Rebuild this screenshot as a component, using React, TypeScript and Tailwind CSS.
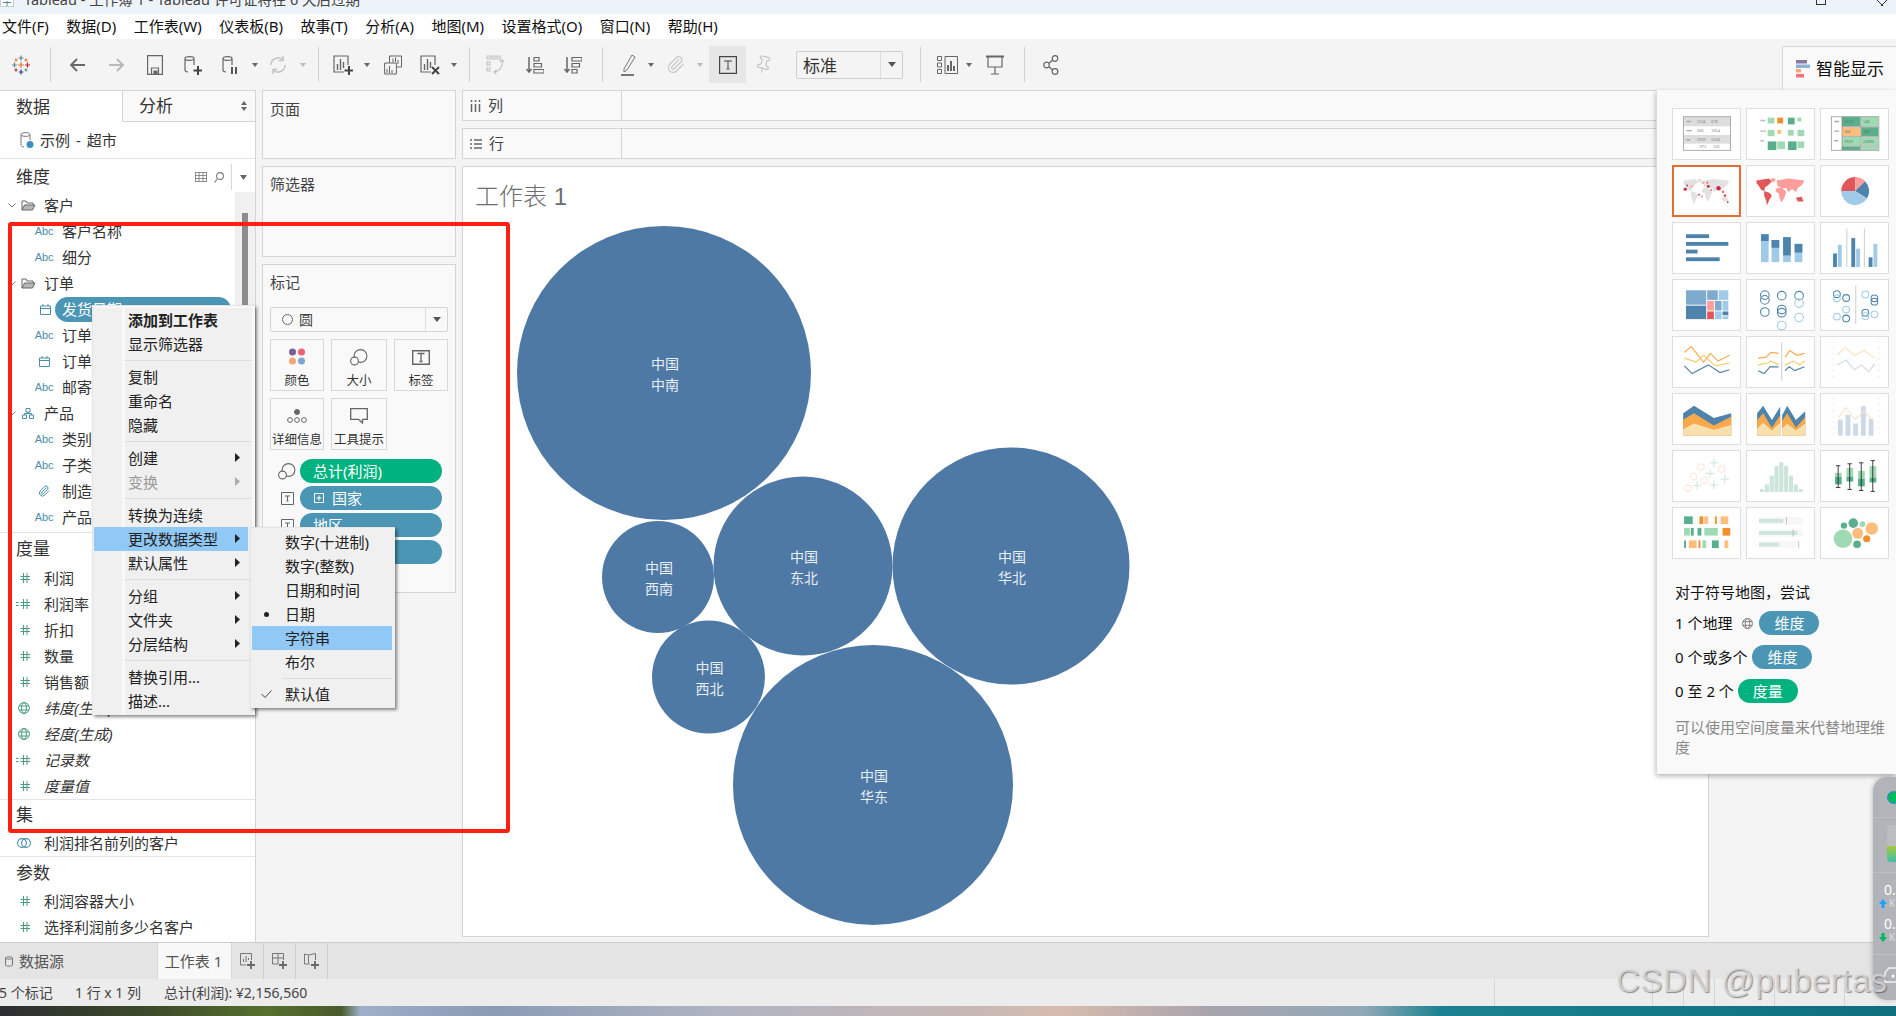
import type { ReactNode } from 'react'
import { Paperclip, Pin } from 'lucide-react'

const DARK = '#59ae8b'
const LIGHT = '#a0dab3'
const ORANGE = '#f28e2b'
const PEACH = '#ffbe7d'
const BLUE = '#4e83ab'
const SKY = '#a0cbe8'

function Caret({ disabled }: { disabled?: boolean }) {
  return (
    <svg width="6" height="4" viewBox="0 0 6 4">
      <path d="M0 0h6L3 4z" fill={disabled ? '#bbbbbb' : '#666666'} />
    </svg>
  )
}

function Slot({ className, children }: { className: string; children?: ReactNode }) {
  return <div className={`flex h-full shrink-0 items-center justify-center ${className}`}>{children}</div>
}

function Sep({ className }: { className: string }) {
  return <div className={`h-[35px] w-px shrink-0 bg-[#d0d0d0] ${className}`} />
}

function TableauLogo() {
  const cross = (x: number, y: number, s: number, c: string) => (
    <path key={`${x}-${y}`} d={`M${x - s} ${y}h${s * 2}M${x} ${y - s}v${s * 2}`} stroke={c} strokeWidth="1.2" />
  )
  return (
    <svg width="18" height="20" viewBox="0 0 18 20">
      {cross(9, 10, 3, '#e8762c')}
      {cross(9, 3, 2.4, '#5b879b')}
      {cross(9, 17, 2.4, '#1f447e')}
      {cross(2.5, 10, 2.4, '#59879b')}
      {cross(15.5, 10, 2.4, '#c72035')}
      {cross(4, 5, 1.6, '#e8762c')}
      {cross(14, 5, 1.6, '#e8762c')}
      {cross(4, 15, 1.6, '#c72035')}
      {cross(14, 15, 1.6, '#5b879b')}
    </svg>
  )
}

function Cylinder({ children }: { children: ReactNode }) {
  return (
    <svg width="18" height="20" viewBox="0 0 18 20" fill="none" stroke="#666666" strokeWidth="1.2">
      <path d="M1 3.5C1 1 10 1 10 3.5V10M1 3.5C1 6 10 6 10 3.5M1 3.5V15c0 1 1 1.8 3 2" />
      {children}
    </svg>
  )
}

function BarIcon({ children }: { children: ReactNode }) {
  return (
    <svg width="20" height="20" viewBox="0 0 20 20" fill="none" stroke="#666666" strokeWidth="1.2">
      <path d="M11 17H1V1h14v9" />
      <path d="M4.5 15V9M7.5 15V4M10.5 13V7" strokeWidth="1.4" />
      {children}
    </svg>
  )
}

function Toolbar() {
  return (
    <div className="flex h-[51px] shrink-0 items-center bg-[#f4f4f4]">
      <Slot className="w-[42px]"><TableauLogo /></Slot>
      <Sep className="ml-[8px]" />
      <Slot className="ml-[7px] w-[38px]">
        <svg width="17" height="16" viewBox="0 0 17 16" fill="none" stroke="#666666" strokeWidth="1.8"><path d="M16 8H2M8 2 2 8l6 6" /></svg>
      </Slot>
      <Slot className="w-[40px]">
        <svg width="17" height="16" viewBox="0 0 17 16" fill="none" stroke="#b8b8b8" strokeWidth="1.8"><path d="M1 8h14M9 2l6 6-6 6" /></svg>
      </Slot>
      <Slot className="w-[38px]">
        <svg width="16" height="20" viewBox="0 0 16 20" fill="none" stroke="#666666" strokeWidth="1.2"><path d="M.6.6h14.8v18.8H.6zM4.5 19v-6h7v6" /><path d="M7 16h3v3H7z" fill="#666666" /></svg>
      </Slot>
      <Slot className="w-[38px]">
        <Cylinder><path d="M14 11v9M9.5 15.5h9" strokeWidth="2" stroke="#444444" /></Cylinder>
      </Slot>
      <Slot className="w-[38px]">
        <Cylinder><path d="M10 12v7M14 12v7" strokeWidth="2" stroke="#555555" /></Cylinder>
      </Slot>
      <Slot className="w-[10px]"><Caret /></Slot>
      <Slot className="w-[36px]">
        <svg width="18" height="20" viewBox="0 0 18 20" fill="none" stroke="#c4c4c4" strokeWidth="1.5"><path d="M2 10a7 7 0 0 1 12-5M16 10a7 7 0 0 1-12 5" /><path d="M14 1v4.5H9.5M4 19v-4.5h4.5" /></svg>
      </Slot>
      <Slot className="w-[14px]"><Caret disabled /></Slot>
      <Sep className="ml-[8px]" />
      <Slot className="ml-[6px] w-[36px]">
        <BarIcon><path d="M16 11v9M11.5 15.5H20" stroke="#444444" strokeWidth="2" /></BarIcon>
      </Slot>
      <Slot className="w-[12px]"><Caret /></Slot>
      <Slot className="w-[40px]">
        <svg width="18" height="20" viewBox="0 0 18 20" fill="none" stroke="#666666" strokeWidth="1"><path d="M5.5 8V1h12v11h-5" /><path d="M.6 8h11.8v11H.6z" fill="#f4f4f4" /><path d="M9 7.5v-4M11.500 7V2.500M14 9V5M3 18v-4M5.5 18v-7M8 18v-3" /></svg>
      </Slot>
      <Slot className="w-[34px]">
        <BarIcon><path d="M12 12l7 7M19 12l-7 7" stroke="#444444" strokeWidth="2" /></BarIcon>
      </Slot>
      <Slot className="w-[14px]"><Caret /></Slot>
      <Sep className="ml-[8px]" />
      <Slot className="w-[50px]">
        <svg width="18" height="20" viewBox="0 0 18 20" fill="none" stroke="#c0c0c0" strokeWidth="1.1"><path d="M1 1h3v3H1zM6 1h3v3H6zM11 1h3v3h-3zM1 7h3v3H1zM1 13h3v3H1z" /><path d="M16 6c1 5-1 9-7 11M16 4.500 13.500 7M16 4.500 18 7M8 17l2.500-2M8 17l2.500 2" /></svg>
      </Slot>
      <Slot className="w-[30px]">
        <svg width="18" height="18" viewBox="0 0 18 18" fill="none" stroke="#666666" strokeWidth="1.2"><path d="M3 1v15M.5 13 3 16l2.500-3" strokeWidth="1.5" /><path d="M8 1.500h5v3.500H8zM8 7.500h7.500V11H8zM8 13.500h10V17H8z" /></svg>
      </Slot>
      <Slot className="w-[46px]">
        <svg width="18" height="18" viewBox="0 0 18 18" fill="none" stroke="#666666" strokeWidth="1.2"><path d="M3 1v15M.5 13 3 16l2.500-3" strokeWidth="1.5" /><path d="M8 1.500h10V5H8zM8 7.500h7.500V11H8zM8 13.500h5V17H8z" /></svg>
      </Slot>
      <Sep className="ml-[6px]" />
      <Slot className="ml-[10px] w-[32px]">
        <svg width="16" height="22" viewBox="0 0 16 22" fill="none" stroke="#777777" strokeWidth="1"><path d="M3 15 11 1l3 2-8 13-3 2z" /><path d="M0 21h13" strokeWidth="2" /></svg>
      </Slot>
      <Slot className="w-[12px]"><Caret /></Slot>
      <Slot className="w-[36px]"><Paperclip size={19} color="#c8c8c8" strokeWidth={1.5} /></Slot>
      <Slot className="w-[14px]"><Caret disabled /></Slot>
      <div className="ml-[2px] flex h-[37px] w-[37px] shrink-0 items-center justify-center bg-[#e6e6e6]">
        <svg width="18" height="18" viewBox="0 0 18 18" fill="none" stroke="#444444"><path d="M.6.6h16.8v16.8H.6z" strokeWidth="1.2" /><path d="M5 5h8M9 5v8M7.500 13h3" /></svg>
      </div>
      <Slot className="w-[34px]"><Pin size={19} color="#c4c4c4" strokeWidth={1.5} className="rotate-[15deg]" /></Slot>
      <div className="ml-[16px] flex h-[28px] w-[107px] shrink-0 rounded-[2px] border border-[#cfcfcf] text-[#333333]">
        <div className="flex-1 pl-[6px] text-[17px] leading-[27px]">标准</div>
        <div className="flex w-[22px] items-center justify-center border-l border-[#dddddd]"><svg width="8" height="5" viewBox="0 0 8 5"><path d="M0 0h8L4 5z" fill="#555555" /></svg></div>
      </div>
      <Sep className="ml-[17px]" />
      <Slot className="ml-[8px] w-[36px]">
        <svg width="21" height="18" viewBox="0 0 21 18" fill="none" stroke="#666666"><path d="M.5.500h4v4h-4zM.5 7h4v4h-4zM.5 13.500h4v4h-4zM8 .5h12.500v17H8z" /><path d="M11 15V9M14 15V5M17 15v-5" strokeWidth="2" /></svg>
      </Slot>
      <Slot className="w-[8px]"><Caret /></Slot>
      <Slot className="w-[44px]">
        <svg width="18" height="20" viewBox="0 0 18 20" fill="none" stroke="#666666"><path d="M0 1.500h18" strokeWidth="2" /><path d="M2 2v10h14V2M9 12v7M5 19h8" strokeWidth="1.2" /></svg>
      </Slot>
      <Sep className="ml-[7px]" />
      <Slot className="w-[52px]">
        <svg width="16" height="20" viewBox="0 0 16 20" fill="none" stroke="#666666" strokeWidth="1.2"><circle cx="3.5" cy="10" r="2.8" /><circle cx="12" cy="3.5" r="2.8" /><circle cx="12" cy="16.5" r="2.8" /><path d="M6 8.300 9.700 5M6 11.700 9.700 15" /></svg>
      </Slot>
      <div className="flex-1" />
      <div className="mt-[7px] flex h-[44px] w-[114px] shrink-0 items-center gap-[6px] border-l border-t border-[#d8d8d8] bg-[#f9f9f9] pl-[13px] text-[17px] text-[#111111]">
        <svg width="14" height="18" viewBox="0 0 14 18" className="shrink-0"><path d="M0 0h11v3.500H0z" fill="#8a77a0" /><path d="M0 4.500h14V8H0z" fill="#8fb0d4" /><path d="M0 9h5v3.500H0z" fill="#f4a673" /><path d="M0 14h8v3.500H0z" fill="#f0737f" /></svg>
        <span>智能显示</span>
      </div>
    </div>
  )
}

function Hash({ calc }: { calc?: boolean }) {
  return (
    <svg width="16" height="12" viewBox="0 0 16 12" fill="none" stroke="#4a9c80" strokeWidth="1">
      {calc && <path d="M0 4.500h2.500M0 7.500h2.500" strokeWidth="1.2" />}
      <path d="M7.500 1v10M11 1v10M4.500 4.500h9.500M4.500 7.500h9.500" />
    </svg>
  )
}

function Globe() {
  return (
    <svg width="12" height="12" viewBox="0 0 12 12" fill="none" stroke="#4a9c80" strokeWidth="1">
      <circle cx="6" cy="6" r="5.4" />
      <ellipse cx="6" cy="6" rx="2.4" ry="5.4" />
      <path d="M1 4h10M1 8h10" />
    </svg>
  )
}

function Calendar() {
  return (
    <svg width="11" height="11" viewBox="0 0 11 11" fill="none" stroke="#4b8eaa" strokeWidth="1">
      <path d="M.5 2h10v8.500H.5zM.5 4.500h10M3 0v2M8 0v2" />
    </svg>
  )
}

function Folder() {
  return (
    <svg width="15" height="11" viewBox="0 0 15 11" fill="none" stroke="#666666" strokeWidth="1">
      <path d="M1 10V1h4l1 2h6v2" />
      <path d="M1 10h10.500L14 5H3.500z" fill="#b8b8b8" />
    </svg>
  )
}

function Chevron() {
  return (
    <svg width="8" height="5" viewBox="0 0 8 5" fill="none" stroke="#777777"><path d="m.5.500 3.500 3.500 3.500-3.500" /></svg>
  )
}

function Abc() {
  return <span className="font-['Liberation_Sans',sans-serif] text-[11px] tracking-[-0.2px] text-[#4b8eaa]">Abc</span>
}

function GroupRow({ icon, label, chevron = true }: { icon: ReactNode; label: string; chevron?: boolean }) {
  return (
    <div className="flex h-[26px] items-center">
      <span className="flex w-[18px] justify-end pr-[2px]">{chevron && <Chevron />}</span>
      <span className="flex w-[20px] justify-center">{icon}</span>
      <span className="ml-[6px] whitespace-nowrap">{label}</span>
    </div>
  )
}

function DimRow({ icon, label }: { icon: ReactNode; label: string }) {
  return (
    <div className="flex h-[26px] items-center">
      <span className="ml-[36px] flex w-[16px] justify-center">{icon}</span>
      <span className="ml-[10px] whitespace-nowrap">{label}</span>
    </div>
  )
}

function MeasureRow({ icon, label, italic }: { icon: ReactNode; label: string; italic?: boolean }) {
  return (
    <div className="flex h-[26px] items-center">
      <span className="ml-[16px] flex w-[16px] justify-center">{icon}</span>
      <span className={`ml-[12px] whitespace-nowrap ${italic ? 'italic' : ''}`}>{label}</span>
    </div>
  )
}

function DataPanel() {
  return (
    <div className="flex w-[256px] shrink-0 flex-col border-r border-t border-[#d4d4d4] bg-white text-[15px] text-[#333333]">
      <div className="flex h-[31px] shrink-0 text-[17px]">
        <div className="flex w-[122px] items-center pl-[16px]">数据</div>
        <div className="flex flex-1 items-center justify-between border-b border-l border-[#d4d4d4] bg-[#f9f9f9] pl-[16px] pr-[8px]">
          <span>分析</span>
          <svg width="6" height="10" viewBox="0 0 6 10"><path d="M0 4h6L3 0zM0 6h6l-3 4z" fill="#666666" /></svg>
        </div>
      </div>
      <div className="flex h-[37px] shrink-0 items-center gap-[6px] border-b border-[#e4e4e4] pl-[20px]">
        <svg width="14" height="18" viewBox="0 0 14 18" fill="none" stroke="#777777"><path d="M1 3.500C1 1 10 1 10 3.500V9M1 3.500C1 6 10 6 10 3.500M1 3.500V14c0 1 1 1.800 3 2" /><circle cx="10" cy="13.5" r="3.5" fill="#3f8fc4" stroke="none" /></svg>
        <span className="[word-spacing:2px]">示例 - 超市</span>
      </div>
      <div className="flex h-[33px] shrink-0 items-center pl-[16px] pr-[8px] pt-[3px] text-[17px]">
        <span className="flex-1">维度</span>
        <svg width="12" height="10" viewBox="0 0 12 10" fill="none" stroke="#777777" strokeWidth="0.8"><path d="M0 .5h12M0 3.500h12M0 6.500h12M0 9.500h12M.5 0v10M4 0v10M8 0v10M11.500 0v10" /></svg>
        <svg className="ml-[7px]" width="10" height="11" viewBox="0 0 10 11" fill="none" stroke="#777777" strokeWidth="1.1"><circle cx="6" cy="4" r="3.4" /><path d="M3.500 6.500 .5 10.500" /></svg>
        <div className="ml-[7px] mr-[8px] h-[26px] w-px bg-[#d8d8d8]" />
        <svg width="7" height="5" viewBox="0 0 7 5"><path d="M0 0h7L3.500 5z" fill="#666666" /></svg>
      </div>
      <div className="flex h-[340px] shrink-0">
        <div className="min-w-0 flex-1 overflow-hidden">
          <GroupRow icon={<Folder />} label="客户" />
          <DimRow icon={<Abc />} label="客户名称" />
          <DimRow icon={<Abc />} label="细分" />
          <GroupRow icon={<Folder />} label="订单" />
          <div className="relative flex h-[26px] items-center">
            <span className="ml-[36px] flex w-[16px] justify-center pl-[3px]"><Calendar /></span>
            <div className="ml-[3px] flex h-[25px] w-[176px] shrink-0 items-center rounded-full bg-[#4b96b4] pl-[7px] text-white">发货日期</div>
          </div>
          <DimRow icon={<Abc />} label="订单 Id" />
          <DimRow icon={<Calendar />} label="订单日期" />
          <DimRow icon={<Abc />} label="邮寄方式" />
          <GroupRow
            icon={
              <svg width="12" height="11" viewBox="0 0 12 11" fill="none" stroke="#4b8eaa"><path d="M4 .5h4v3.500H4zM.5 7h4v3.500h-4zM7.500 7h4v3.500h-4zM6 4v1.500H2.500V7M6 5.500h3.500V7" /></svg>
            }
            label="产品"
          />
          <DimRow icon={<Abc />} label="类别" />
          <DimRow icon={<Abc />} label="子类别" />
          <DimRow icon={<Paperclip size={12} color="#4b8eaa" />} label="制造商" />
          <DimRow icon={<Abc />} label="产品名称" />
        </div>
        <div className="w-[20px] shrink-0 bg-[#f0f0f0] pl-[7px] pt-[21px]">
          <div className="h-[110px] w-[6px] bg-[#8c8c8c]" />
        </div>
      </div>
      <div className="flex h-[33px] shrink-0 items-center border-t border-[#e4e4e4] pl-[16px] text-[17px]">度量</div>
      <MeasureRow icon={<Hash />} label="利润" />
      <MeasureRow icon={<Hash calc />} label="利润率" />
      <MeasureRow icon={<Hash />} label="折扣" />
      <MeasureRow icon={<Hash />} label="数量" />
      <MeasureRow icon={<Hash />} label="销售额" />
      <MeasureRow icon={<Globe />} label="纬度(生成)" italic />
      <MeasureRow icon={<Globe />} label="经度(生成)" italic />
      <MeasureRow icon={<Hash calc />} label="记录数" italic />
      <MeasureRow icon={<Hash />} label="度量值" italic />
      <div className="flex h-[31px] shrink-0 items-center border-t border-[#e4e4e4] pl-[16px] text-[17px]">集</div>
      <MeasureRow
        icon={
          <svg width="14" height="12" viewBox="0 0 14 12" fill="none" stroke="#4b8eaa" strokeWidth="1.1"><circle cx="5" cy="6" r="4.4" /><circle cx="9" cy="6" r="4.4" /></svg>
        }
        label="利润排名前列的客户"
      />
      <div className="flex h-[32px] shrink-0 items-center border-t border-[#e4e4e4] pl-[16px] text-[17px]">参数</div>
      <MeasureRow icon={<Hash />} label="利润容器大小" />
      <MeasureRow icon={<Hash />} label="选择利润前多少名客户" />
    </div>
  )
}

function MarkButton({ label, children }: { label: string; children: ReactNode }) {
  return (
    <div className="flex h-[52px] flex-col items-center justify-between border border-[#d8d8d8] pt-[5px] text-[12.5px] leading-[18px] text-[#333333]">
      <div className="flex h-[24px] items-center">{children}</div>
      <span className="whitespace-nowrap">{label}</span>
    </div>
  )
}

function TBox() {
  return (
    <svg width="13" height="13" viewBox="0 0 13 13" fill="none" stroke="#666666"><path d="M.5.500h12v12H.5z" /><path d="M4 4h5M6.500 4v5M5.500 9h2" /></svg>
  )
}

function SizeGlyph() {
  return (
    <svg width="18" height="17" viewBox="0 0 18 17" fill="none" stroke="#666666" strokeWidth="1.1"><circle cx="10.5" cy="7" r="6.4" /><circle cx="4.5" cy="12" r="3.9" fill="#f9f9f9" /></svg>
  )
}

function MarkPill({ icon, color, children }: { icon?: ReactNode; color: string; children: ReactNode }) {
  return (
    <div className="flex items-center">
      <span className="flex w-[31px] justify-center pl-[5px]">{icon}</span>
      <div className={`flex h-[24px] w-[142px] items-center rounded-full pl-[13px] text-[15px] text-white ${color}`}>{children}</div>
    </div>
  )
}

function CardsColumn() {
  return (
    <div className="flex w-[206px] shrink-0 flex-col gap-[7px] pl-[6px]">
      <div className="h-[69px] w-[194px] border border-[#d4d4d4] bg-[#f9f9f9] pl-[7px] pt-[7px] text-[15px] text-[#444444]">页面</div>
      <div className="h-[91px] w-[194px] border border-[#d4d4d4] bg-[#f9f9f9] pl-[7px] pt-[6px] text-[15px] text-[#444444]">筛选器</div>
      <div className="h-[329px] w-[194px] border border-[#d4d4d4] bg-[#f9f9f9] pl-[7px] pr-[7px] pt-[7px]">
        <div className="text-[15px] leading-[21px] text-[#444444]">标记</div>
        <div className="mt-[14px] flex h-[25px] rounded-[2px] border border-[#d4d4d4] text-[14px] text-[#444444]">
          <div className="flex flex-1 items-center gap-[6px] pl-[11px]">
            <span className="h-[11px] w-[11px] rounded-full border border-[#666666]" />圆
          </div>
          <div className="flex w-[22px] items-center justify-center border-l border-[#dddddd]">
            <svg width="8" height="5" viewBox="0 0 8 5"><path d="M0 0h8L4 5z" fill="#555555" /></svg>
          </div>
        </div>
        <div className="mt-[7px] grid grid-cols-[54px_56px_54px] gap-[7px]">
          <MarkButton label="颜色">
            <svg width="18" height="18" viewBox="0 0 18 18"><circle cx="4.5" cy="4" r="3.5" fill="#7a5f96" /><circle cx="13.5" cy="4" r="3.5" fill="#ef5f6f" /><circle cx="4.5" cy="13" r="3.5" fill="#f4a673" /><circle cx="13.5" cy="13" r="3.5" fill="#7fa6d1" /></svg>
          </MarkButton>
          <MarkButton label="大小"><SizeGlyph /></MarkButton>
          <MarkButton label="标签">
            <svg width="18" height="15" viewBox="0 0 18 15" fill="none" stroke="#666666"><path d="M.7.700h16.600v13.600H.7z" strokeWidth="1.4" /><path d="M5.500 3.500h7M9 3.500v8M7.500 11.500h3" strokeWidth="1.3" /></svg>
          </MarkButton>
          <MarkButton label="详细信息">
            <svg width="20" height="14" viewBox="0 0 20 14" fill="none" stroke="#666666"><circle cx="10" cy="3" r="2.5" fill="#666666" /><circle cx="3" cy="11" r="2.4" /><circle cx="10" cy="11" r="2.4" /><circle cx="17" cy="11" r="2.4" /></svg>
          </MarkButton>
          <MarkButton label="工具提示">
            <svg width="18" height="16" viewBox="0 0 18 16" fill="none" stroke="#666666" strokeWidth="1.3"><path d="M.7.700h16.600v10.600H12.500V15l-4-3.700H.7z" /></svg>
          </MarkButton>
        </div>
        <div className="mt-[9px] ml-[-1px] flex flex-col gap-[3px]">
          <MarkPill icon={<SizeGlyph />} color="bg-[#00b27f]">总计(利润)</MarkPill>
          <MarkPill icon={<TBox />} color="bg-[#4b96b4]">
            <svg className="mr-[7px] ml-[1px]" width="11" height="11" viewBox="0 0 11 11" fill="none" stroke="#ffffff"><path d="M.5.500h9v9h-9zM2.500 5h5M5 2.500v5" /></svg>
            国家
          </MarkPill>
          <MarkPill icon={<TBox />} color="bg-[#4b96b4]">地区</MarkPill>
          <MarkPill icon={<TBox />} color="bg-[#4b96b4]">省/自治区</MarkPill>
        </div>
      </div>
    </div>
  )
}

function Shelf({ icon, label }: { icon: ReactNode; label: string }) {
  return (
    <div className="flex h-[31px] shrink-0 border-y border-l border-[#d4d4d4] bg-[#f9f9f9]">
      <div className="flex w-[159px] items-center gap-[7px] border-r border-[#d4d4d4] pl-[7px] text-[15px] text-[#444444]">
        {icon}
        {label}
      </div>
    </div>
  )
}

const bubbles = [
  { cx: 664, cy: 373, r: 147, a: '中南' },
  { cx: 658, cy: 577, r: 56, a: '西南' },
  { cx: 803, cy: 566, r: 89.5, a: '东北' },
  { cx: 1011, cy: 566, r: 118.5, a: '华北' },
  { cx: 708.5, cy: 677, r: 56.5, a: '西北' },
  { cx: 873, cy: 785, r: 140, a: '华东' },
]

function Canvas() {
  return (
    <div className="relative h-[771px] w-[1247px] shrink-0 border border-[#d4d4d4] bg-white">
      <svg className="absolute inset-0" width="1245" height="769" viewBox="463 167 1245 769">
        {bubbles.map((b) => (
          <g key={b.a}>
            <circle cx={b.cx} cy={b.cy} r={b.r} fill="#4f79a5" />
            <text x={b.cx + 1} y={b.cy - 4} textAnchor="middle" fontSize="14" fill="#e8eef5">中国</text>
            <text x={b.cx + 1} y={b.cy + 17} textAnchor="middle" fontSize="14" fill="#e8eef5">{b.a}</text>
          </g>
        ))}
      </svg>
      <div className="relative pl-[12px] pt-[10px] font-['Liberation_Sans','Noto_Sans_CJK_SC',sans-serif] text-[24px] font-light leading-[40px] text-[#6e6e6e]">工作表 1</div>
    </div>
  )
}

function ThumbBox({ selected, children }: { selected?: boolean; children: ReactNode }) {
  return (
    <div className={`h-[52px] w-[69px] border bg-white ${selected ? 'border-2 border-[#e26d35]' : 'border-[#dedede]'}`}>
      <svg width="100%" height="100%" viewBox="0 0 68 52" fontFamily="Liberation Serif, serif">
        {children}
      </svg>
    </div>
  )
}

function Rects({ items }: { items: [number, number, number, number, string][] }) {
  return (
    <>
      {items.map(([x1, y1, x2, y2, c], i) => (
        <rect key={i} x={x1} y={y1} width={x2 - x1} height={y2 - y1} fill={c} />
      ))}
    </>
  )
}

function Poly({ d, fill, stroke }: { d: string; fill?: string; stroke?: string }) {
  return <polyline points={d} fill={fill ?? 'none'} stroke={stroke} strokeWidth="1.2" />
}

function World({ a, b }: { a: string; b: string }) {
  return (
    <>
      <path d="M9 15 22 13 25 16 21 20 18 22 17 26 14 25 11 20 9 18Z" fill={a} />
      <path d="M24 13h5l-1 3-3 1Z" fill={b} />
      <path d="M17 26 23 28 25 31 22 36 20 41 19 36 17 31Z" fill={a} />
      <path d="M30 15 42 13 59 15 56 20 52 23 50 27 46 24 42 27 40 23 35 23 31 21Z" fill={b} />
      <path d="M30 23 36 23 40 27 38 33 35 38 33 33 32 28 29 27Z" fill={b} />
      <path d="M50 33 56 32 58 37 52 37Z" fill={a} />
    </>
  )
}

function Ticks() {
  return (
    <path d="M10 5h3M10 11h3M10 17h3M10 23h3M10 29h3M10 35h3M10 41h3M58 5h3M58 11h3M58 17h3M58 23h3M58 29h3M58 35h3M58 41h3" stroke="#eeeeee" />
  )
}

const thumbs: { selected?: boolean; art: ReactNode }[] = [
  {
    art: (
      <>
        <Rects items={[[10, 8, 59, 18, '#dddddd'], [10, 27, 59, 36, '#dddddd']]} />
        <rect x="10" y="8" width="49" height="35" fill="none" stroke="#aaaaaa" />
        <path d="M13 13h5M13 22.500h6M13 32h4" stroke="#aaaaaa" strokeWidth="1.5" />
        <g fontSize="4.5" fill="#777777">
          <text x="24" y="15">1234</text><text x="39" y="15">678</text>
          <text x="24" y="24">368</text><text x="39" y="24">3014</text>
          <text x="24" y="33">2929</text><text x="39" y="33">2556</text>
          <text x="27" y="41">971</text><text x="41" y="41">322</text>
        </g>
      </>
    ),
  },
  {
    art: (
      <>
        <path d="M13 12h5M13 23h6M13 33h4" stroke="#bbbbbb" strokeWidth="1.5" />
        <Rects
          items={[
            [20.7, 9, 27.7, 15, LIGHT], [30.7, 9, 36.7, 15, ORANGE], [41.7, 9, 48.7, 16, DARK], [51.7, 9, 55.7, 13, LIGHT],
            [20.7, 21.7, 27.7, 28.3, LIGHT], [30.7, 21.7, 34.7, 25.7, PEACH], [41.7, 21.7, 47.7, 27.7, LIGHT], [51.7, 21.7, 58.7, 28.3, LIGHT],
            [20.7, 33.7, 29.7, 42.7, DARK], [30.7, 33.7, 38.7, 41.7, LIGHT], [41.7, 33.7, 50.7, 42.7, DARK], [51.7, 33.7, 58.7, 40.7, LIGHT],
          ]}
        />
      </>
    ),
  },
  {
    art: (
      <>
        <path d="M13 13h5M13 23h5M13 33h4" stroke="#aaaaaa" strokeWidth="1.5" />
        <Rects
          items={[
            [21, 8, 40, 18, DARK], [41, 8, 59, 18, LIGHT], [21, 19, 40, 28, PEACH], [41, 19, 59, 28, DARK],
            [21, 29, 40, 38, LIGHT], [41, 29, 59, 38, LIGHT], [21, 39, 40, 43, DARK], [41, 39, 59, 43, LIGHT],
          ]}
        />
        <rect x="10" y="8" width="49.3" height="35" fill="none" stroke="#aaaaaa" />
        <path d="M21 8v35M40.500 8v35M21 18.500h38M21 28.500h38M21 38.500h38" stroke="#777777" strokeWidth="0.6" />
        <g fontSize="4.5" fill="#557766">
          <text x="23" y="15">1234</text><text x="43" y="15">546</text>
          <text x="23" y="25">368</text><text x="43" y="25">380</text>
          <text x="23" y="35">2929</text><text x="43" y="35">53890</text>
        </g>
      </>
    ),
  },
  {
    selected: true,
    art: (
      <>
        <World a="#e2e2e2" b="#e2e2e2" />
        {[
          [11, 24, 1.8, '#c72f45'], [13, 20, 1, '#c72f45'], [18, 21, 1.5, '#ffb0ac'], [30, 17, 1.5, '#ffb0ac'], [26, 30, 1, '#c72f45'], [29, 32, 1.3, '#ffb0ac'],
          [36, 21, 1.5, '#c72f45'], [39, 25, 1, '#e15759'], [47, 23, 2.4, '#c72f45'], [52, 27, 1.2, '#e15759'], [54, 31, 1.5, '#e15759'], [57, 38, 1, '#c72f45'], [35, 17, 1, '#e15759'],
        ].map(([x, y, r, c], i) => (
          <circle key={i} cx={x} cy={y} r={r} fill={c as string} />
        ))}
      </>
    ),
  },
  { art: <World a="#e15759" b="#ff9d9a" /> },
  {
    art: (
      <>
        <path d="M34.700 26H20.200A14.500 14.500 0 0 1 34.700 11.500Z" fill="#e15759" />
        <path d="M34.700 26V11.500A14.500 14.500 0 0 1 45 15.750Z" fill="#ff9d9a" />
        <path d="M34.700 26 45 15.750A14.500 14.500 0 0 1 47 33.700Z" fill={BLUE} />
        <path d="M34.700 26 47 33.700A14.500 14.500 0 0 1 20.200 26Z" fill={SKY} />
      </>
    ),
  },
  {
    art: <Rects items={[[12.7, 11.7, 36.7, 15.7, BLUE], [12.7, 19.7, 56.7, 23.7, BLUE], [12.7, 27.7, 24.7, 31.7, BLUE], [12.7, 35.7, 47.7, 39.7, BLUE]]} />,
  },
  {
    art: (
      <Rects
        items={[
          [13.7, 11.7, 21.7, 40.7, SKY], [13.7, 11.7, 21.7, 18.7, BLUE],
          [24.7, 17.7, 32.7, 40.7, SKY], [24.7, 17.7, 32.7, 25.7, BLUE],
          [36.7, 14.7, 44.7, 40.7, SKY], [36.7, 14.7, 44.7, 33.7, BLUE],
          [48.7, 21.7, 56.7, 40.7, SKY], [48.7, 21.7, 56.7, 30.7, BLUE],
        ]}
      />
    ),
  },
  {
    art: (
      <>
        <path d="M26 5.700v40M44.300 5.700v40" stroke="#cccccc" />
        <Rects
          items={[
            [11.7, 31.7, 15.7, 45.7, BLUE], [16.7, 22.7, 20.7, 45.7, SKY], [30.7, 15.7, 34.7, 45.7, BLUE],
            [35.7, 26.7, 39.7, 45.7, SKY], [48.7, 35.7, 52.7, 45.7, BLUE], [53.7, 21.7, 57.7, 45.7, SKY],
          ]}
        />
      </>
    ),
  },
  {
    art: (
      <Rects
        items={[
          [12.7, 10.7, 33.7, 25.7, '#7eaacd'], [12.7, 26.7, 33.7, 40.7, BLUE], [34.7, 10.7, 45.7, 20.7, '#7eaacd'], [46.7, 10.7, 56.7, 20.7, SKY],
          [34.7, 21.7, 41.7, 31.7, '#ff9d9a'], [42.7, 21.7, 49.7, 31.7, '#7eaacd'], [50.7, 21.7, 56.7, 31.7, SKY],
          [34.7, 32.7, 41.7, 40.7, '#e15759'], [42.7, 32.7, 49.7, 40.7, SKY], [50.7, 32.7, 56.7, 36.7, BLUE], [50.7, 37.7, 56.7, 40.7, SKY],
        ]}
      />
    ),
  },
  {
    art: (
      <g fill="none" strokeWidth="1.1">
        {[[17.7, 15.7, 0], [17.7, 20.7, 0], [35.3, 16.3, 0], [17.7, 33.3, 0], [35.3, 30.7, 0], [35.3, 34, 0], [53.3, 16.3, 0], [53.3, 24, 1], [53.3, 39, 1], [35.3, 47.3, 1]].map(([x, y, l], i) => (
          <circle key={i} cx={x} cy={y} r="4.5" stroke={l ? SKY : BLUE} />
        ))}
      </g>
    ),
  },
  {
    art: (
      <>
        <path d="M35.300 5.700v40" stroke="#cccccc" />
        <g fill="none" strokeWidth="1.1">
          {[[15.7, 14.7, 0], [15.7, 19, 1], [25.3, 18.7, 0], [25.3, 30.7, 1], [15.7, 38, 1], [25.3, 40, 0], [45.3, 15, 1], [54.7, 19, 0], [54.7, 22.5, 0], [45.3, 34, 0], [45.3, 37.5, 1], [54.7, 35.7, 1]].map(([x, y, l], i) => (
            <circle key={i} cx={x} cy={y} r="3.5" stroke={l ? SKY : BLUE} />
          ))}
        </g>
      </>
    ),
  },
  {
    art: (
      <>
        <Poly d="11,16 18,10 31,26 38,17 46,25 58,19" stroke="#f9a94b" />
        <Poly d="11,22 23,26 31,19 43,30 58,27" stroke="#f9cb6f" />
        <Poly d="11,30 19,38 36,29 48,37 58,34" stroke={BLUE} />
      </>
    ),
  },
  {
    art: (
      <>
        <path d="M35.300 5.700v40" stroke="#cccccc" />
        <Poly d="10.7,22 19,21 24,16 32,17" stroke="#f9a94b" />
        <Poly d="10.7,29 21,27 24,25 32,29" stroke="#f9cb6f" />
        <Poly d="10.7,35 17,38 23,31 32,31" stroke={BLUE} />
        <Poly d="38.7,21 43.7,14 51,19 59,17" stroke="#f9a94b" />
        <Poly d="38.7,29 47.7,25 54,29 59,25" stroke="#f9cb6f" />
        <Poly d="38.7,35 43,31 49,35 59,31" stroke={BLUE} />
      </>
    ),
  },
  {
    art: (
      <>
        <Ticks />
        <Poly d="16,19 24,11 34,19 44,14 55,22" stroke="#fce4c8" />
        <Poly d="16,29 25,24 34,34 41,29 49,36 55,28" stroke="#d1dce8" />
      </>
    ),
  },
  {
    art: (
      <>
        <path d="M9.700 20 21 12.300 41.700 25 59.700 20V43.300H9.700Z" fill={BLUE} />
        <path d="M9.700 26.700 21 20 41.700 32.700 59.700 23.300V43.300H9.700Z" fill="#f9a94b" />
        <path d="M9.700 36.700 21 30.700 41.700 37.300 59.700 32.300V43.300H9.700Z" fill="#f8e0ad" />
      </>
    ),
  },
  {
    art: (
      <>
        <path d="M9.700 20 16 12.300 25 27 33.700 13.300V43.300H9.700Z" fill={BLUE} />
        <path d="M9.700 27 16 20 25 35 33.700 22V43.300H9.700Z" fill="#f9a94b" />
        <path d="M9.700 36 16 30 25 38 33.700 30V43.300H9.700Z" fill="#f8e0ad" />
        <path d="M35.700 22 41 12.300 50 27 59.700 18V43.300H35.700Z" fill={BLUE} />
        <path d="M35.700 28 41 20 50 35 59.700 24V43.300H35.700Z" fill="#f9a94b" />
        <path d="M35.700 36 41 31 50 38 59.700 31V43.300H35.700Z" fill="#f8e0ad" />
      </>
    ),
  },
  {
    art: (
      <>
        <Ticks />
        <Rects
          items={[
            [16.7, 26.7, 21.7, 43.3, '#ccd9e6'], [24.7, 21.7, 29.7, 43.3, '#ccd9e6'], [32.7, 30.7, 37.7, 43.3, '#ccd9e6'],
            [40.7, 12.7, 45.7, 43.3, '#ccd9e6'], [48.7, 25.7, 53.7, 43.3, '#ccd9e6'],
          ]}
        />
        <Poly d="17.7,24 25,14 34,26.7 44,18.3 54,28" stroke="#fce4c8" />
      </>
    ),
  },
  {
    art: (
      <>
        <g fill="none" stroke="#fde2cc">
          <circle cx="28.3" cy="16.7" r="3.5" /><circle cx="49.7" cy="18.7" r="3.5" /><circle cx="20.7" cy="26.7" r="3.5" /><circle cx="31.7" cy="30.7" r="3.5" /><circle cx="14.7" cy="38.7" r="3.5" />
        </g>
        <path d="M37.200 12.300h9M41.700 7.800v9M33.200 23.300h9M37.700 18.800v9M48.500 29.300h9M53 24.800v9M37.200 35.300h9M41.700 30.800v9M19.800 36h9M24.300 31.500v9" stroke="#c7e6d6" />
      </>
    ),
  },
  {
    art: (
      <Rects
        items={[
          [12.7, 39.7, 17, 42.7, '#cde5da'], [17.7, 34.7, 22, 42.7, '#cde5da'], [22.7, 25.7, 27, 42.7, '#cde5da'], [27.7, 15.7, 32, 42.7, '#cde5da'], [32.7, 11.7, 37, 42.7, '#cde5da'],
          [37.7, 15.7, 42, 42.7, '#cde5da'], [42.7, 25.7, 47, 42.7, '#cde5da'], [47.7, 34.7, 52, 42.7, '#cde5da'], [52.7, 39.7, 57, 42.7, '#cde5da'],
        ]}
      />
    ),
  },
  {
    art: (
      <>
        <Rects
          items={[
            [13.7, 22.7, 20.7, 26.7, LIGHT], [13.7, 26.7, 20.7, 34.7, DARK], [25.7, 17.7, 32.7, 26.7, LIGHT], [25.7, 26.7, 32.7, 31.7, DARK],
            [37.7, 20.7, 44.7, 28.7, LIGHT], [37.7, 28.7, 44.7, 36.7, DARK], [49.7, 15.7, 56.7, 27.7, LIGHT], [49.7, 27.7, 56.7, 32.7, DARK],
          ]}
        />
        <path d="M17 15.300V38M14.700 15.300h4.600M14.700 38h4.600M29 13.300V40M26.700 13.300h4.600M26.700 40h4.600M41 12.300V41M38.700 12.300h4.600M38.700 41h4.600M53 10V42M50.700 10h4.600M50.700 42h4.600" stroke="#222222" strokeWidth="0.9" />
      </>
    ),
  },
  {
    art: (
      <Rects
        items={[
          [10.7, 8.7, 19.7, 16.7, DARK], [26.7, 8.7, 30.7, 16.7, ORANGE], [31.7, 8.7, 35.7, 16.7, PEACH], [42.7, 8.7, 44.7, 16.7, ORANGE], [48.7, 8.7, 56.7, 16.7, PEACH],
          [10.7, 20.7, 16.7, 28.7, LIGHT], [17.7, 20.7, 20.7, 28.7, DARK], [24.7, 20.7, 28.7, 28.7, DARK], [31.7, 20.7, 45.7, 28.7, LIGHT], [50.7, 20.7, 58.7, 28.7, ORANGE],
          [10.7, 33.7, 12.7, 41.7, DARK], [15.7, 33.7, 23.7, 41.7, PEACH], [25.7, 33.7, 27.7, 41.7, ORANGE], [29.7, 33.7, 33.7, 41.7, LIGHT], [39.7, 33.7, 46.7, 41.7, DARK], [52.7, 33.7, 56.7, 41.7, PEACH],
        ]}
      />
    ),
  },
  {
    art: (
      <Rects
        items={[
          [11.7, 9.3, 57.7, 17.3, '#f7f7f7'], [11.7, 11.3, 36.7, 15.3, '#cde5da'], [39.7, 9.3, 40.4, 17.3, '#aaaaaa'],
          [11.7, 22.3, 57.7, 29.7, '#f7f7f7'], [11.7, 24, 51.7, 28, '#cde5da'], [46.7, 22.3, 47.4, 29.7, '#aaaaaa'],
          [11.7, 34.3, 50, 41.7, '#f7f7f7'], [11.7, 36, 32.7, 40, '#cde5da'], [52.7, 34.3, 53.4, 41.7, '#aaaaaa'],
        ]}
      />
    ),
  },
  {
    art: (
      <>
        <circle cx="22" cy="32" r="9.7" fill={LIGHT} />
        <circle cx="37.3" cy="26.3" r="5.7" fill={PEACH} />
        <circle cx="52" cy="21.3" r="6.5" fill={PEACH} />
        <circle cx="32.7" cy="15.7" r="5" fill={DARK} />
        <circle cx="23" cy="18.3" r="3.3" fill={DARK} />
        <circle cx="42.3" cy="16.7" r="3" fill={LIGHT} />
        <circle cx="46.7" cy="32" r="3.7" fill={ORANGE} />
        <circle cx="36.7" cy="37.7" r="4" fill={DARK} />
      </>
    ),
  },
]

function Chip({ green, children }: { green?: boolean; children: ReactNode }) {
  return (
    <span className={`inline-flex h-[24px] w-[60px] shrink-0 items-center justify-center rounded-full text-[15px] text-white ${green ? 'bg-[#00b27f]' : 'bg-[#4b96b4]'}`}>
      {children}
    </span>
  )
}

function ShowMe() {
  return (
    <div className="absolute left-[1656px] top-[90px] h-[684px] w-[240px] border-l border-[#dcdcdc] bg-[#f9f9f9] shadow-[0_2px_5px_rgba(0,0,0,0.3)]">
      <div className="ml-[15px] mt-[18px] grid grid-cols-[69px_69px_69px] gap-x-[5px] gap-y-[5px]">
        {thumbs.map((t, i) => (
          <ThumbBox key={i} selected={t.selected}>{t.art}</ThumbBox>
        ))}
      </div>
      <div className="ml-[18px] mt-[23px] text-[15px] text-[#111111]">
        <div className="leading-[20px]">对于符号地图，尝试</div>
        <div className="mt-[9px] flex h-[24px] items-center gap-[10px]">1 个地理
          <svg width="11" height="11" viewBox="0 0 12 12" fill="none" stroke="#777777"><circle cx="6" cy="6" r="5.4" /><ellipse cx="6" cy="6" rx="2.4" ry="5.4" /><path d="M1 4h10M1 8h10" /></svg>
          <span className="ml-[-4px]"><Chip>维度</Chip></span>
        </div>
        <div className="mt-[10px] flex h-[24px] items-center gap-[5px]">0 个或多个<Chip>维度</Chip></div>
        <div className="mt-[10px] flex h-[24px] items-center gap-[4px]">0 至 2 个<Chip green>度量</Chip></div>
        <div className="mt-[14px] w-[214px] leading-[20px] text-[#8a8a8a]">可以使用空间度量来代替地理维度</div>
      </div>
    </div>
  )
}

function Arrow({ disabled }: { disabled?: boolean }) {
  return (
    <svg className="absolute left-[141px] top-[7px]" width="5" height="9" viewBox="0 0 5 9"><path d="M0 0l5 4.500L0 9z" fill={disabled ? '#aaaaaa' : '#222222'} /></svg>
  )
}

function MenuItem({ label, bold, disabled, arrow, active }: { label: string; bold?: boolean; disabled?: boolean; arrow?: boolean; active?: boolean }) {
  return (
    <div className={`relative -ml-[31px] flex h-[24px] items-center pl-[34px] ${active ? 'w-[154px] bg-[#90c8f6]' : ''} ${disabled ? 'text-[#9a9a9a]' : ''} ${bold ? 'font-bold' : ''}`}>
      {label}
      {arrow && <Arrow disabled={disabled} />}
    </div>
  )
}

function MenuSep() {
  return (
    <div className="flex h-[9px] items-center">
      <div className="h-px w-full bg-[#dcdcdc]" />
    </div>
  )
}

function ContextMenu() {
  return (
    <div className="absolute left-[92px] top-[305px] flex h-[410px] w-[163px] border-l border-t border-[#e6e6e6] bg-[#f8f8f8] pt-[2px] text-[15px] text-[#222222] shadow-[2px_2px_3px_rgba(0,0,0,0.45)]">
      <div className="w-[29px] shrink-0 bg-[#f0f0f0]" />
      <div className="ml-[3px] w-[127px] bg-[#f0f0f0]">
        <MenuItem label="添加到工作表" bold />
        <MenuItem label="显示筛选器" />
        <MenuSep />
        <MenuItem label="复制" />
        <MenuItem label="重命名" />
        <MenuItem label="隐藏" />
        <MenuSep />
        <MenuItem label="创建" arrow />
        <MenuItem label="变换" arrow disabled />
        <MenuSep />
        <MenuItem label="转换为连续" />
        <MenuItem label="更改数据类型" arrow active />
        <MenuItem label="默认属性" arrow />
        <MenuSep />
        <MenuItem label="分组" arrow />
        <MenuItem label="文件夹" arrow />
        <MenuItem label="分层结构" arrow />
        <MenuSep />
        <MenuItem label="替换引用..." />
        <MenuItem label="描述..." />
      </div>
    </div>
  )
}

function SubItem({ label, mark, active }: { label: string; mark?: ReactNode; active?: boolean }) {
  return (
    <div className={`flex h-[24px] items-center ${active ? 'bg-[#90c8f6]' : ''}`}>
      <span className="flex w-[28px] shrink-0 justify-center">{mark}</span>
      <span className="ml-[5px]">{label}</span>
    </div>
  )
}

function SubMenu() {
  return (
    <div className="absolute left-[250px] top-[527px] h-[181px] w-[145px] border-l border-t border-[#e6e6e6] bg-[#f0f0f0] pl-[1px] pr-[3px] pt-[2px] text-[15px] text-[#222222] shadow-[2px_2px_3px_rgba(0,0,0,0.45)]">
      <SubItem label="数字(十进制)" />
      <SubItem label="数字(整数)" />
      <SubItem label="日期和时间" />
      <SubItem label="日期" mark={<span className="h-[5px] w-[5px] rounded-full bg-[#222222]" />} />
      <SubItem label="字符串" active />
      <SubItem label="布尔" />
      <div className="ml-[30px] flex h-[8px] items-center"><div className="h-px w-full bg-[#dcdcdc]" /></div>
      <SubItem label="默认值" mark={<svg width="11" height="8" viewBox="0 0 11 8" fill="none" stroke="#444444"><path d="m.5 4 3.500 3.500L10.500.5" /></svg>} />
    </div>
  )
}

function TabIcon({ children }: { children: ReactNode }) {
  return <div className="flex h-full w-[32px] shrink-0 items-center justify-center border-r border-[#cccccc]">{children}</div>
}

function Plus() {
  return <path d="M11 8v8M7 12h8" stroke="#666666" strokeWidth="1.8" />
}

function TabBar() {
  return (
    <div className="flex h-[37px] shrink-0 items-stretch border-t border-[#cccccc] bg-[#e4e4e4] text-[15px] text-[#555555]">
      <div className="flex w-[157px] items-center gap-[6px] pl-[5px]">
        <svg width="8" height="11" viewBox="0 0 8 11" fill="none" stroke="#777777"><path d="M.5 2C.5.500 7.500.500 7.500 2v7c0 1.500-7 1.500-7 0zM.5 2c0 1.500 7 1.500 7 0" /></svg>
        数据源
      </div>
      <div className="flex w-[75px] items-center justify-center border-x border-[#d8d8d8] bg-[#f8f8f8] pr-[2px]">工作表 1</div>
      <TabIcon>
        <svg width="16" height="16" viewBox="0 0 16 16" fill="none" stroke="#777777"><path d="M6 12H.5V.5h11V7M3.500 9V6M6 9V3M8.500 7V5" /><Plus /></svg>
      </TabIcon>
      <TabIcon>
        <svg width="16" height="16" viewBox="0 0 16 16" fill="none" stroke="#777777"><path d="M6 11H.5V.5h11V7M.5 5h11M6 .5V11" /><Plus /></svg>
      </TabIcon>
      <TabIcon>
        <svg width="16" height="16" viewBox="0 0 16 16" fill="none" stroke="#777777"><path d="M6 11H.5V1l4 1 7-1.500V7M4.500 2v8" /><Plus /></svg>
      </TabIcon>
    </div>
  )
}

function StatusBar() {
  return (
    <div className="flex h-[27px] shrink-0 items-center bg-[#ececec] text-[14px] text-[#444444]">
      <span className="ml-[-1px] w-[76px]">5 个标记</span>
      <span className="w-[89px]">1 行 x 1 列</span>
      <span>总计(利润): ¥2,156,560</span>
      <div className="ml-auto flex h-full">
        <div className="w-[158px] border-l border-[#d4d4d4]" />
        <div className="w-[31px] border-l border-[#d4d4d4]" />
        <div className="w-[31px] border-l border-[#d4d4d4]" />
        <div className="w-[60px] border-l border-[#d4d4d4]" />
        <div className="w-[70px] border-l border-[#d4d4d4]" />
        <div className="w-[52px] border-l border-[#d4d4d4]" />
      </div>
    </div>
  )
}

function Meter() {
  return (
    <div className="absolute left-[1873px] top-[777px] h-[223px] w-[23px] overflow-hidden rounded-l-[14px] bg-[#aeb0b5]/95 text-white shadow-[-1px_0_4px_rgba(0,0,0,0.2)]">
      <div className="ml-[14px] mt-[14px] h-[13px] w-[13px] rounded-full border border-[#3f7fd0] bg-[#00b860]" />
      <div className="mt-[13px] h-px bg-[#bdbfc3]" />
      <div className="ml-[14px] mt-[7px] flex h-[37px] w-[14px] flex-col justify-end rounded-l-[4px] bg-[#bcbdc0]">
        <div className="h-[16px] rounded-bl-[4px] bg-[linear-gradient(180deg,#a8c83c,#3cc0a8)]" />
      </div>
      <div className="mt-[10px] h-px bg-[#bdbfc3]" />
      <div className="ml-[11px] mt-[10px] text-[14px] leading-[14px]">0.</div>
      <div className="flex h-[12px] items-center pl-[6px]">
        <svg width="8" height="9" viewBox="0 0 8 9"><path d="M4 0l4 5H5.500v4h-3V5H0z" fill="#1aa3ff" /></svg>
        <span className="ml-[2px] text-[10px] leading-[12px] text-[#dddddd]">K</span>
      </div>
      <div className="ml-[11px] mt-[8px] text-[14px] leading-[14px]">0.</div>
      <div className="flex h-[12px] items-center pl-[6px]">
        <svg width="8" height="9" viewBox="0 0 8 9"><path d="M4 9l4-5H5.500V0h-3v4H0z" fill="#00b860" /></svg>
        <span className="ml-[2px] text-[10px] leading-[12px] text-[#dddddd]">K</span>
      </div>
      <div className="mt-[11px] h-px bg-[#bdbfc3]" />
      <svg className="ml-[11px] mt-[12px]" width="14" height="16" viewBox="0 0 14 16" fill="none" stroke="#f0f0f0" strokeWidth="1.5">
        <path d="M1 5.500 5 1h9M1 5.500V15h13" />
        <circle cx="9" cy="9" r="1.5" fill="#ffffff" stroke="none" />
      </svg>
    </div>
  )
}

const menus = ['文件(F)', '数据(D)', '工作表(W)', '仪表板(B)', '故事(T)', '分析(A)', '地图(M)', '设置格式(O)', '窗口(N)', '帮助(H)']

export default function App() {
  return (
    <div className="relative flex h-[1016px] w-[1896px] flex-col overflow-hidden bg-[#f4f4f4] font-['Noto_Sans','Noto_Sans_CJK_SC',sans-serif]">
      {/* title bar is cut off at the top of the capture */}
      <div className="flex h-[14px] shrink-0 items-start overflow-hidden bg-[#eef3f9] text-[14.5px] leading-[14px] text-[#444444]">
        <span className="flex h-[7px] w-[14px] shrink-0 items-end justify-center border-x border-b border-[#c4d0dc] bg-white">
          <svg width="8" height="5" viewBox="0 0 8 5" fill="none" stroke="#5b879b"><path d="M0 1.500h8M4 0v5" /></svg>
        </span>
        <span className="ml-[10px] -translate-y-[8px] whitespace-nowrap">Tableau - 工作簿 1 - Tableau 许可证将在 6 天后过期</span>
        <div className="ml-auto flex items-start gap-[50px] pr-[8px]">
          <span className="h-[5px] w-[10px] border-x border-b border-[#333333]" />
          <svg width="12" height="6" viewBox="0 0 12 6" fill="none" stroke="#333333"><path d="M1 0l6 6M11 0 5 6" /></svg>
        </div>
      </div>
      <div className="flex h-[25px] shrink-0 items-center gap-[17.5px] bg-white pl-[2px] text-[15px] text-[#111111]">
        {menus.map((m) => (
          <span key={m}>{m}</span>
        ))}
      </div>
      <Toolbar />
      <div className="flex h-[852px] shrink-0">
        <DataPanel />
        <CardsColumn />
        <div className="flex min-w-0 flex-1 flex-col gap-[7px]">
          <Shelf
            icon={<svg width="11" height="12" viewBox="0 0 11 12" fill="none" stroke="#666666"><path d="M1.500 4v8M5.500 4v8M9.500 4v8M1.500 0v2M5.500 0v2M9.500 0v2" strokeWidth="1.5" /></svg>}
            label="列"
          />
          <Shelf
            icon={<svg width="12" height="10" viewBox="0 0 12 10" fill="none" stroke="#666666"><path d="M0 1h2M0 5h2M0 9h2M4 1h8M4 5h8M4 9h8" strokeWidth="1.5" /></svg>}
            label="行"
          />
          <Canvas />
        </div>
      </div>
      <TabBar />
      <StatusBar />
      <div className="h-[10px] shrink-0 bg-[linear-gradient(90deg,#2b2e30_0%,#3d4a2a_8%,#55702e_14%,#4a5a2c_18%,#9db0c8_19%,#8a9bb4_26%,#b0b4c2_38%,#c9b8b4_52%,#d6bcae_56%,#a8a4ac_64%,#90a8b8_72%,#1a8290_76%,#0e6f7d_100%)]" />
      <ShowMe />
      <ContextMenu />
      <SubMenu />
      <div className="absolute left-[8px] top-[222px] h-[611px] w-[502px] rounded-[3px] border-[4px] border-[#ff2012]" />
      <Meter />
      <div className="absolute left-[1616px] top-[963px] whitespace-nowrap font-['Liberation_Sans',sans-serif] text-[33px] leading-[36px] tracking-[0.5px] text-[#dedede]/80 [text-shadow:1px_1px_1px_rgba(60,60,60,0.55)]">
        CSDN @pubertas
      </div>
    </div>
  )
}
